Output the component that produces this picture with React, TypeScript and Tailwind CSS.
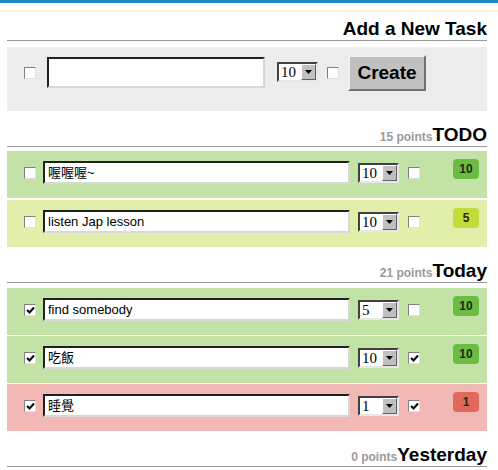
import React from "react";

const FONT = { fontFamily: '"Liberation Sans", Arial, "Noto Sans CJK TC", sans-serif' };

function Check({ checked = false }: { checked?: boolean }) {
  return (
    <div className="w-[12px] h-[12px] shrink-0 border border-t-[#808080] border-l-[#808080] border-b-[#e0e0e0] border-r-[#e0e0e0] bg-white flex items-center justify-center">
      {checked && (
        <svg width="9" height="9" viewBox="0 0 9 9">
          <path d="M1 4 L3.5 6.5 L8 1.5" stroke="#000" strokeWidth="2" fill="none" />
        </svg>
      )}
    </div>
  );
}

function Select({ value }: { value: string }) {
  return (
    <div className="w-[41px] h-[20px] shrink-0 flex border-2 border-t-[#404040] border-l-[#404040] border-b-[#e8e8e8] border-r-[#e8e8e8] bg-white">
      <div
        className="flex-1 text-[15px] leading-[16px] pl-[2px] text-black"
        style={{ fontFamily: '"Liberation Serif", "Times New Roman", serif' }}
      >
        {value}
      </div>
      <div className="w-[15px] h-full bg-[#c0c0c0] border border-t-white border-l-white border-b-[#606060] border-r-[#606060] flex items-center justify-center">
        <svg width="7" height="4" viewBox="0 0 7 4">
          <path d="M0 0 H7 L3.5 4 Z" fill="#000" />
        </svg>
      </div>
    </div>
  );
}

function TextInput({ value, w, h }: { value: string; w: string; h: string }) {
  return (
    <div
      className={`${w} ${h} shrink-0 bg-white border-2 border-t-[#202020] border-l-[#202020] border-b-[#d8d8d8] border-r-[#d8d8d8] flex items-center pl-[3px] text-[13px] text-black`}
    >
      {value}
    </div>
  );
}

function Heading({ points, title, first = false }: { points?: string; title: string; first?: boolean }) {
  return (
    <div
      className={`flex justify-end items-baseline border-b border-[#999999] pb-[2px] ${first ? "pt-[7px]" : "pt-[14px]"}`}
    >
      {points && <span className="text-[12px] font-bold text-[#9a9a9a] leading-none">{points}</span>}
      <span className="text-[19px] font-bold text-black leading-none">{title}</span>
    </div>
  );
}

type Task = { done: boolean; text: string; pts: string; chk2: boolean; badge: string; bg: string; badgeBg: string };

function Row({ t }: { t: Task }) {
  return (
    <div className={`h-[47px] flex items-start pt-[10px] ${t.bg}`}>
      <div className="w-[17px]" />
      <div className="mt-[6px]"><Check checked={t.done} /></div>
      <div className="w-[7px]" />
      <TextInput value={t.text} w="w-[307px]" h="h-[23px]" />
      <div className="w-[8px]" />
      <div className="mt-[2px]"><Select value={t.pts} /></div>
      <div className="w-[9px]" />
      <div className="mt-[6px]"><Check checked={t.chk2} /></div>
      <div className="flex-1" />
      <div className={`-mt-[2px] w-[26px] h-[20px] rounded-[4px] ${t.badgeBg} flex items-center justify-center text-[12px] font-bold text-[#1c2a10]`}>
        {t.badge}
      </div>
      <div className="w-[8px]" />
    </div>
  );
}

const todo: Task[] = [
  { done: false, text: "喔喔喔~", pts: "10", chk2: false, badge: "10", bg: "bg-[#c3e2a5]", badgeBg: "bg-[#6cbb45]" },
  { done: false, text: "listen Jap lesson", pts: "10", chk2: false, badge: "5", bg: "bg-[#e1efab]", badgeBg: "bg-[#c3dc3a]" },
];
const today: Task[] = [
  { done: true, text: "find somebody", pts: "5", chk2: false, badge: "10", bg: "bg-[#c3e2a5]", badgeBg: "bg-[#6cbb45]" },
  { done: true, text: "吃飯", pts: "10", chk2: true, badge: "10", bg: "bg-[#c3e2a5]", badgeBg: "bg-[#6cbb45]" },
  { done: true, text: "睡覺", pts: "1", chk2: true, badge: "1", bg: "bg-[#f2b8b5]", badgeBg: "bg-[#e2685b]" },
];

export default function App() {
  return (
    <div className="w-[498px] h-[470px] bg-white overflow-hidden" style={FONT}>
      <div className="h-[3px] bg-[#1b8cc4]" />
      <div className="mt-[7px] h-[2px] bg-[#fdf7dc]" />
      <div className="ml-[7px] w-[480px]">
        <Heading title="Add a New Task" first />
        <div className="mt-[6px] h-[64px] bg-[#ececec] flex items-start pt-[8px]">
          <div className="w-[17px]" />
          <div className="mt-[12px]"><Check /></div>
          <div className="w-[11px]" />
          <div className="mt-[2px]"><TextInput value="" w="w-[218px]" h="h-[31px]" /></div>
          <div className="w-[12px]" />
          <div className="mt-[7px]"><Select value="10" /></div>
          <div className="w-[9px]" />
          <div className="mt-[12px]"><Check /></div>
          <div className="w-[9px]" />
          <div className="w-[78px] h-[36px] bg-[#c0c0c0] border-2 border-t-[#f0f0f0] border-l-[#f0f0f0] border-b-[#707070] border-r-[#707070] flex items-center justify-center text-[19px] font-bold text-black">
            Create
          </div>
        </div>
        <Heading points="15 points" title="TODO" />
        <div className="mt-[4px] flex flex-col gap-[2px]">
          {todo.map((t, i) => <Row key={i} t={t} />)}
        </div>
        <Heading points="21 points" title="Today" />
        <div className="mt-[5px] flex flex-col gap-[1px]">
          {today.map((t, i) => <Row key={i} t={t} />)}
        </div>
        <Heading points="0 points" title="Yesterday" />
      </div>
    </div>
  );
}
